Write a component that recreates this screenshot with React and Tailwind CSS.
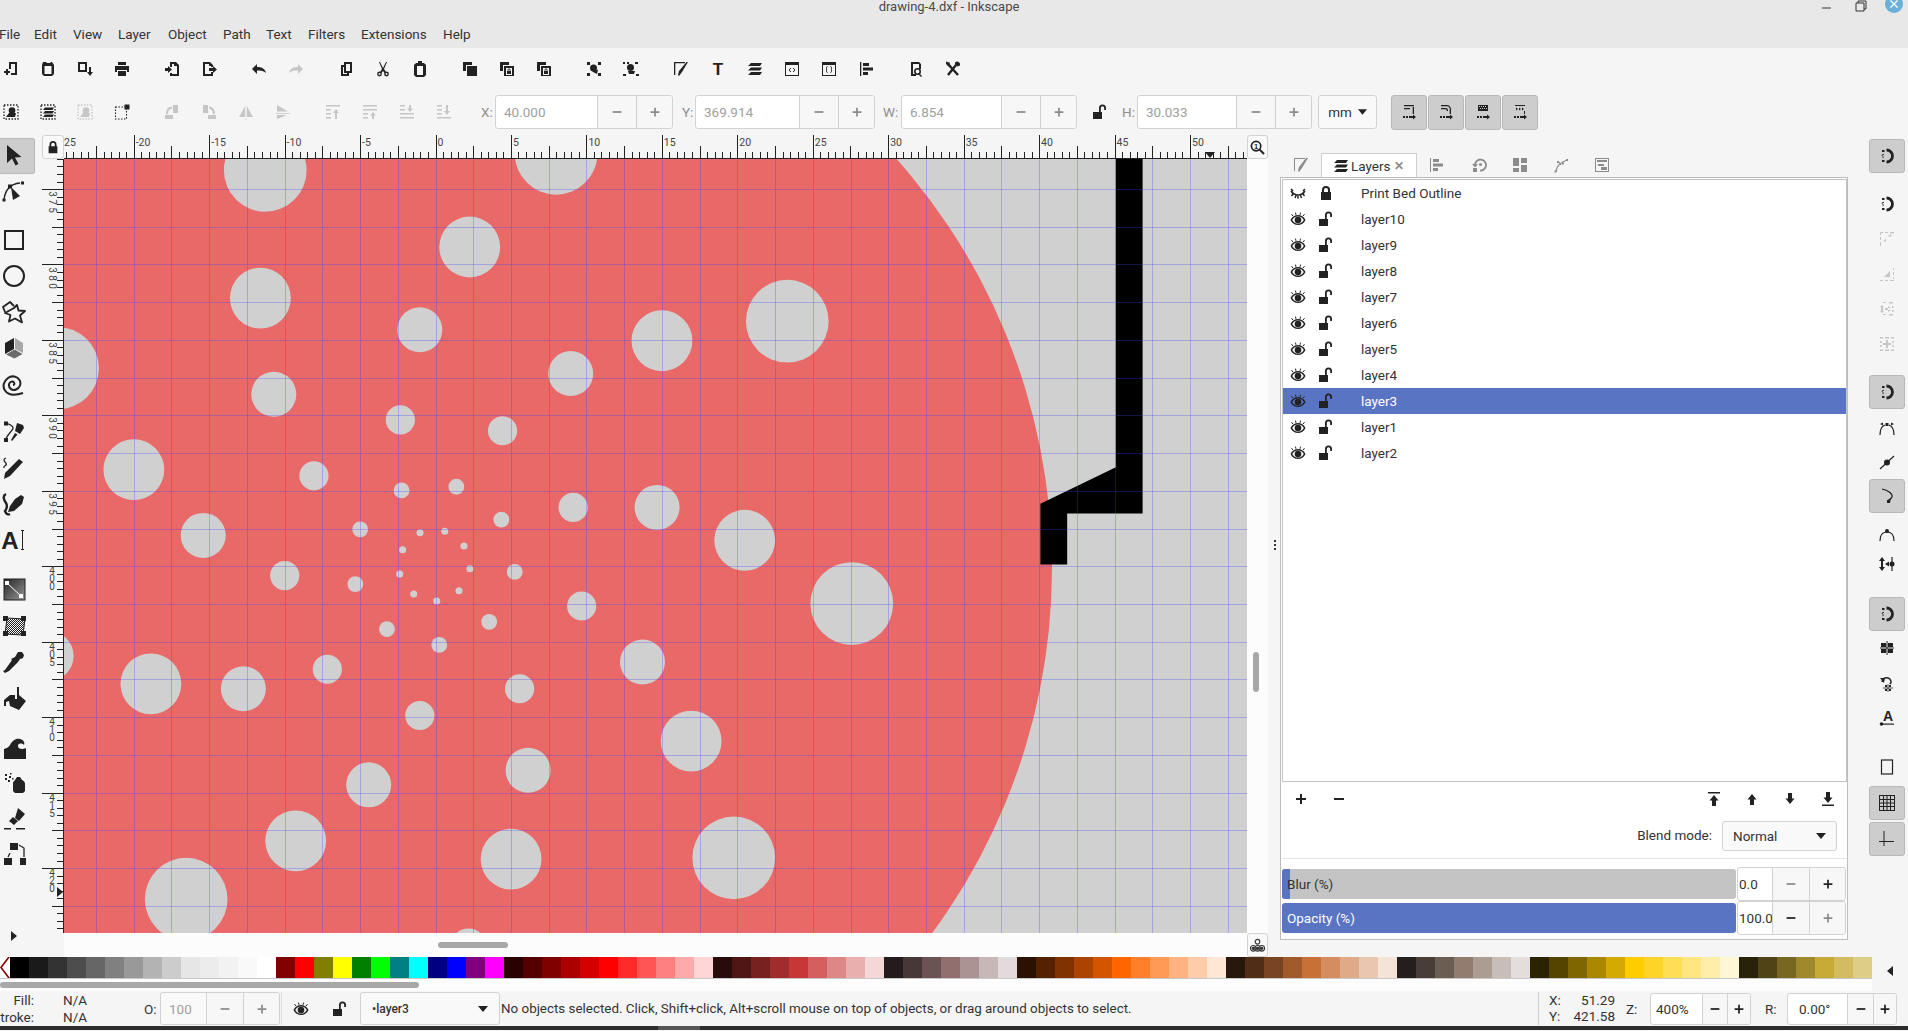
const S = 1908 / 1568

// icon drawings, 16x16 box unless noted
const I = {
  new: <path d="M6 1h8v13H8v-2h4V3H8v5H6zM3 8h2v2h2v2H5v2H3v-2H1v-2h2z" />,
  open: <path fillRule="evenodd" d="M3 1h3l1 1h3l1-1h1l2 3v9l-2 2H4l-2-2V4zM4.500 5v8h7V5z" />,
  saveas: <path fillRule="evenodd" d="M1 1h9v10H1zM3 3v6h5V3zM12 6h2v5h2l-3 4-3-4h2z" />,
  print: <path d="M4 1h8v3H4zM1 5h14v6h-2V9H3v2H1zM4 10h8v5H4z" />,
  import: <path d="M6 1h6l3 3v11H6v-3h2v1h5V5h-3V3H8v3H6zM1 7h3V5l4 3.500L4 12v-2H1z" />,
  export: <path d="M2 1h7l3 3v2h-2V5H8V3H4v10h6v-2h2v4H2zM8 7h4V5l4 3.500L12 12v-2H8z" />,
  undo: <path d="M1 8l5-5v3c4 0 8 1 9 6-2-2-5-2.500-9-2.500V13z" />,
  redo: <path d="M15 8l-5-5v3C6 6 2 7 1 12c2-2 5-2.500 9-2.500V13z" />,
  dup: <path fillRule="evenodd" d="M6 1h8v11h-3v3H3V4h3zM8 3v7h4V3zM5 6v7h4v-1H6V6z" />,
  cut: (
    <>
      <path d="M4 1l3 7-2 3 1.500 1L8 10l1.500 2L11 11 9 8l3-7h-1L8 7 5 1z" />
      <circle cx="4.500" cy="13" r="1.700" fill="none" stroke="currentColor" strokeWidth="1.400" />
      <circle cx="11.500" cy="13" r="1.700" fill="none" stroke="currentColor" strokeWidth="1.400" />
    </>
  ),
  paste: <path fillRule="evenodd" d="M6 0h4v2h2l2 2v10l-2 2H4l-2-2V4l2-2h2zM5 5v9h6V5z" />,
  group: <path d="M1 1h9v3H4v6H1zM5 5h10v10H5z" />,
  clone: (
    <>
      <path d="M1 1h9v3H4v6H1zM5 5h10v10H5z" />
      <path fill="#f6f6f6" d="M7 7h6v7H7z" />
      <path d="M8 10h4v3H8zM8.600 10V8.800a1.400 1.400 0 0 1 2.800 0V10h-.8V8.800a.6.6 0 0 0-1.200 0V10z" />
    </>
  ),
  nodeSel: (
    <>
      <path d="M1 1h3v3H1zM12 1h3v3h-3zM1 12h3v3H1zM12 12h3v3h-3z" />
      <circle cx="7.500" cy="7" r="3.500" />
      <path d="M6 10.500l6-2-1 4.500z" />
    </>
  ),
  nodeSel2: (
    <>
      <path d="M0 1h2v2H0zM4 1h2v2H4zM12 1h3v2h-3zM0 13h3v2H0zM13 13h3v2h-3z" />
      <circle cx="7.500" cy="6.500" r="3.500" />
      <path d="M5 10h7l-1 3H6z" />
    </>
  ),
  fillstroke: <path d="M1 1h11v1.300H2.300V14H1zM13.500 1H15L9 11l-3 4-1-1 1-4z" />,
  text: (
    <text x="8" y="14" fontSize="17" fontWeight="700" textAnchor="middle" fontFamily="Liberation Sans, sans-serif">
      T
    </text>
  ),
  layers: <path d="M4 2h11l-2 3H1zM4 6.500h11l-2 3H1zM4 11h11l-2 3H1z" />,
  xml: (
    <>
      <path fillRule="evenodd" d="M1 1h14v14H1zM2 4v10h12V4z" />
      <path d="M7 7L5 9l2 2M9 7l2 2-2 2" fill="none" stroke="currentColor" strokeWidth="1" />
    </>
  ),
  css: (
    <>
      <path fillRule="evenodd" d="M1 1h14v14H1zM2 4v10h12V4z" />
      <path d="M6.500 5.500c-1 0-1 1-1 3s0 3 1 3M9.500 5.500c1 0 1 1 1 3s0 3-1 3" fill="none" stroke="currentColor" strokeWidth="1" />
    </>
  ),
  align: <path d="M2 1h1.300v14H2zM5 2h6v3H5zM5 6.500h10v3H5zM5 11h5v3H5z" />,
  doc: (
    <>
      <path d="M3 1h8l2 2v5h-2V3H5v10h3v2H3z" />
      <circle cx="9.500" cy="10.500" r="2.700" fill="none" stroke="currentColor" strokeWidth="1.600" />
      <path d="M11 12l3 3-1 1-3-3z" />
    </>
  ),
  prefs: (
    <>
      <path d="M3 3l10 11" stroke="currentColor" strokeWidth="2.400" />
      <path d="M11 4L3 14" stroke="currentColor" strokeWidth="2.400" />
      <path d="M10 1.500a3 3 0 0 1 5 3l-2.500 1L10 3.500zM1 0.500l3.500 1 1 3.500-2 .5L1 3z" />
    </>
  ),
  selAll: (
    <>
      <rect x="1" y="1" width="14" height="14" fill="none" stroke="currentColor" strokeWidth="1.300" strokeDasharray="1.500 1.500" />
      <circle cx="9" cy="6.500" r="3.300" />
      <path d="M3 13l3-4h7l-1 4z" />
    </>
  ),
  selLayers: (
    <>
      <rect x="1" y="1" width="14" height="14" fill="none" stroke="currentColor" strokeWidth="1.300" strokeDasharray="1.500 1.500" />
      <path d="M5 3.500h9l-1.500 2.400H3zM5 7h9l-1.500 2.400H3zM5 10.500h9L12.500 13H3z" />
    </>
  ),
  deselect: (
    <>
      <rect x="1.500" y="3" width="11" height="12" fill="none" stroke="currentColor" strokeWidth="1.100" strokeDasharray="1.500 1.500" />
      <path d="M10.500 0.500h5v5h-5z" />
    </>
  ),
  rotL: (
    <>
      <path d="M9 1h5v8H9zM1 11h8v4H1z" />
      <path d="M3 10c0-4 1.500-6 5-6.500" fill="none" stroke="currentColor" strokeWidth="2" />
    </>
  ),
  rotR: (
    <>
      <path d="M2 1h5v8H2zM7 11h8v4H7z" />
      <path d="M13 10c0-4-1.500-6-5-6.500" fill="none" stroke="currentColor" strokeWidth="2" />
    </>
  ),
  flipH: <path d="M7.200 2v11H1zM8.800 2v11H15zM7.500 14h1v1.500h-1z" />,
  flipV: <path d="M2 1l11 6.500H2zM1 9h14v.8H1zM2 11h10l-10 4z" />,
  top: <path d="M1 1h14v1.600H1zM1 5h5v1.600H1zM1 9h5v1.600H1zM1 13h5v1.600H1zM11 5l3 4h-2v6h-2V9H8z" />,
  up: <path d="M1 1h14v1.600H1zM1 5h14v1.600H1zM1 9h5v1.600H1zM1 13h5v1.600H1zM11 8l3 3.500h-2V15h-2v-3.500H8z" />,
  down: <path d="M1 1h5v1.600H1zM1 5h5v1.600H1zM1 9h14v1.600H1zM1 13h14v1.600H1zM10 1h2v3.500h2L11 8 8 4.500h2z" />,
  bottom: <path d="M1 1h5v1.600H1zM1 5h5v1.600H1zM1 9h5v1.600H1zM1 13h14v1.600H1zM10 1h2v6h2l-3 4-3-4h2z" />,
  eye: (
    <>
      <path fillRule="evenodd" d="M0.500 9C2 5.500 5 4 8 4s6 1.500 7.500 5C14 12.500 11 14 8 14s-6-1.500-7.500-5zM2.200 9C3.500 11.500 5.500 12.600 8 12.600S12.500 11.500 13.800 9C12.500 6.500 10.500 5.400 8 5.400S3.500 6.500 2.200 9z" />
      <circle cx="8" cy="9" r="3.300" />
      <path d="M3 5L1.500 3.200M6 3.800L5.400 1.600M10 3.800l.6-2.200M13 5l1.500-1.800" stroke="currentColor" strokeWidth="1" />
    </>
  ),
  eyeOff: (
    <path d="M1 6c2 3 4.500 4 7 4s5-1 7-4M1 4l2 2M3 9L1.500 11M6 10.500L5 13M8 11v2.500M10.500 10.500L11.500 13M13 9l1.500 2M15 4l-2 2" fill="none" stroke="currentColor" strokeWidth="1.500" />
  ),
  lock: <path fillRule="evenodd" d="M4 7V5a4 4 0 0 1 8 0v2h1v8H3V7zM6 7h4V5a2 2 0 0 0-4 0z" />,
  unlock: <path d="M1 8h9v7H1zM7 8V4a3.500 3.500 0 0 1 7 0v2h-1.800V4a1.700 1.700 0 0 0-3.400 0v4z" />,
  zoom: (
    <>
      <circle cx="6.500" cy="6.500" r="5" fill="none" stroke="currentColor" strokeWidth="1.800" />
      <path d="M10 10l5 5" stroke="currentColor" strokeWidth="2.200" />
      <text x="6.500" y="9.500" fontSize="8" fontWeight="700" textAnchor="middle" fontFamily="Liberation Sans, sans-serif">
        1
      </text>
    </>
  ),
  display: (
    <g fill="none" stroke="currentColor" strokeWidth="1.200">
      <circle cx="8" cy="4" r="2.500" />
      <circle cx="3.500" cy="11" r="3" />
      <circle cx="8" cy="11" r="3" />
      <circle cx="12.500" cy="11" r="3" />
      <circle cx="3.500" cy="11" r="1.200" fill="currentColor" />
      <circle cx="8" cy="11" r="1.200" fill="currentColor" />
      <circle cx="12.500" cy="11" r="1.200" fill="currentColor" />
    </g>
  ),
  tabBrush: <path d="M1 1h11v1H2v12H1zM13 1h2L9 11l-3 4-1-1 1-4z" />,
  tabAlign: <path d="M2 1h1v14H2zM5 2h6v3H5zM5 6.500h10v3H5zM5 11h5v3H5z" />,
  tabHistory: (
    <>
      <path d="M4 8a5.500 5.500 0 1 1 5 5.500" fill="none" stroke="currentColor" strokeWidth="1.800" />
      <path d="M1 7h6L4 10.500zM2 11h4v4H2z" />
      <circle cx="9.500" cy="7.500" r="1.500" />
    </>
  ),
  tabArrange: <path d="M1 1h6v8H1zM9 1h6v5H9zM1 11h6v4H1zM9 8h6v7H9z" />,
  tabPath: (
    <>
      <path d="M3 15c0-5 3-9 11-12M8 8c-1-2-2-3-3-3" fill="none" stroke="currentColor" strokeWidth="1.200" />
      <path d="M1.500 13.500h2v2h-2zM13 2h2v2h-2zM4 4h2v2H4zM9 5.500h2v2H9z" />
    </>
  ),
  tabSym: (
    <>
      <path fillRule="evenodd" d="M1 1h14v14H1zM2 2v12h12V2z" />
      <path d="M3 3h10v2H3zM4 7h6v2H4zM7 10h6v3H7z" />
    </>
  ),
  add: <path d="M7 3h2v4h4v2H9v4H7V9H3V7h4z" />,
  sub: <path d="M3 7h10v2H3z" />,
  arrTop: <path d="M2 1h12v1.600H2zM8 4l4.500 5.500H10V15H6V9.500H3.500z" />,
  arrUp: <path d="M8 3l4.500 5.500H10V14H6V8.500H3.500z" />,
  arrDown: <path d="M6 2h4v5.500h2.500L8 13 3.500 7.500H6z" />,
  arrBottom: <path d="M2 13.400h12V15H2zM6 1h4v5.500h2.500L8 12 3.500 6.500H6z" />,
  snap: (
    <>
      <path d="M7.500 2a6 6 0 0 1 0 12" fill="none" stroke="currentColor" strokeWidth="2.800" />
      <path d="M3 2h2.500v2H3zM3 12h2.500v2H3z" />
      <path d="M5 6.500C3.500 6 2.500 7 3.500 8s1.500 1.500 0 1.800" fill="none" stroke="currentColor" strokeWidth="0.900" />
    </>
  ),
  snapBox: <path d="M1 1h3v1H2v2H1zM6 1h3v1H6zM11 1h4v1.500h-4zM1 6h1v3H1zM1 11h1v4H1zM11 3l2 2.500H9zM7 8v3L4.500 9.500z" />,
  snapCorner: <path d="M14 2h1v2h-1zM14 6h1v3h-1zM14 11h1v2h-1zM1 14h3v1H1zM6 14h3v1H6zM11 14h4v1h-4zM11 5v6H5z" />,
  snapMid: <path d="M4 1h3v1H4zM10 1h4v1.500h-4zM13 5h1.500v2H13zM13 9h1.500v2H13zM10 13h4v1.500h-4zM4 13h3v1H4zM3 4l2 2H4v4h1l-2 2-2-2h1V6H1zM6 7h6L9 5v6l3-2H6z" />,
  snapCenter: <path d="M1 1h3v1.500H1zM6 1h4v1.500H6zM12 1h3v1.500h-3zM1 5h1.500v2H1zM13.500 5H15v2h-1.500zM1 9h1.500v2H1zM13.500 9H15v2h-1.500zM1 13.500h3V15H1zM6 13.500h4V15H6zM12 13.500h3V15h-3zM7 4h2v3h3v2H9v3H7V9H4V7h3z" />,
  snapCusp: (
    <>
      <path d="M1 14C1 9 3 5 6 4M15 14c0-5-2-9-5-10" fill="none" stroke="currentColor" strokeWidth="1.200" />
      <path d="M6.500 2h3v3h-3zM1 3l3-1.500v3zM15 3l-3-1.500v3z" />
    </>
  ),
  snapPath: (
    <>
      <path d="M1 15L15 2" stroke="currentColor" strokeWidth="1.200" />
      <circle cx="8" cy="8.500" r="3" />
    </>
  ),
  snapPerp: (
    <>
      <path d="M3 1c6 1 11 5 10 8-.6 2-3 3-5 4" fill="none" stroke="currentColor" strokeWidth="1.200" />
      <path d="M8 13l4-3-1 5-3 0z" />
    </>
  ),
  snapSmooth: (
    <>
      <path d="M1 15C1 10 3 6 8 6s7 4 7 9" fill="none" stroke="currentColor" strokeWidth="1.200" />
      <circle cx="8" cy="5" r="2" />
    </>
  ),
  snapLine: (
    <>
      <path d="M3 1l3 4H4v6h2l-3 4-3-4h2V5H0z" />
      <path d="M13 1v14" stroke="currentColor" strokeWidth="1.200" />
      <path d="M6 8l4-2.500v5z" />
      <circle cx="13" cy="8" r="2.500" />
    </>
  ),
  snapGuide: (
    <>
      <path d="M1 8h14M8 1v14" stroke="currentColor" strokeWidth="1" />
      <path d="M2 3h5v4H2zM9 3h5v4H9zM2 9h5v4H2zM9 9h5v4H9z" />
    </>
  ),
  snapRot: (
    <>
      <path d="M3 6c0-3 3-5 6-4s4 4 2 6" fill="none" stroke="currentColor" strokeWidth="1.500" />
      <path d="M1 2l5 0-1 5z" />
      <path d="M4 12h10M9 8v8" stroke="currentColor" strokeWidth="0.800" />
      <path d="M6 9h2v2H6zM10 9h2v2h-2zM6 13h2v2H6zM10 13h2v2h-2z" />
    </>
  ),
  snapText: (
    <>
      <text x="9" y="11" fontSize="14" fontWeight="700" textAnchor="middle" fontFamily="Liberation Sans, sans-serif">
        A
      </text>
      <path d="M3 13.500h12v1.200H3z" />
      <circle cx="2.500" cy="14" r="1.800" />
    </>
  ),
  page: <rect x="2.500" y="1" width="11" height="14" fill="none" stroke="currentColor" strokeWidth="1.200" />,
  gridOn: (
    <path fillRule="evenodd" d="M0 0h16v16H0zM1 1v3h3V1zM5 1v3h2.500V1zM8.500 1v3H11V1zM12 1v3h3V1zM1 5v2.500h3V5zM5 5v2.500h2.500V5zM8.500 5v2.500H11V5zM12 5v2.500h3V5zM1 8.500V11h3V8.500zM5 8.500V11h2.500V8.500zM8.500 8.500V11H11V8.500zM12 8.500V11h3V8.500zM1 12v3h3v-3zM5 12v3h2.500v-3zM8.500 12v3H11v-3zM12 12v3h3v-3z" />
  ),
  guides: <path d="M5 0v15M0 10.500h15" stroke="currentColor" strokeWidth="1" />,
}

// left tool drawings, 25x25 box
const T = {
  arrow: <path d="M6 2v18l5-4.500 3.500 7 3-1.500-3.500-6.500 6.500-.5z" />,
  node: (
    <>
      <path d="M3 21C4 11 9 5 19 4" fill="none" stroke="currentColor" strokeWidth="1.400" />
      <path d="M1.500 19.500h3v3h-3zM7 5.500h4v4H7zM20 2.500h3v3h-3zM10 8l9 9-7 4z" />
    </>
  ),
  rect: <rect x="4" y="3" width="18" height="18" fill="none" stroke="currentColor" strokeWidth="2" />,
  ellipse: <circle cx="13" cy="12" r="10" fill="none" stroke="currentColor" strokeWidth="2" />,
  star: (
    <g fill="none" stroke="currentColor" strokeWidth="1.800" strokeLinejoin="round">
      <path d="M13 8l3-3 1.500 5.500 6.500.5-5 4.500 2 7-7-4-6 3 1.500-6.500L4 13z" />
      <path d="M4 12L2 7l7-5 4 4" />
    </g>
  ),
  box: (
    <>
      <path d="M4 7l9-5v11l-9 5z" />
      <path d="M14 2l8 5v10l-8-4z" fill="#a8a8a8" />
      <path d="M5 18.500l8.500-5 8 4.500-8 4.500z" fill="#6b6b6b" />
    </>
  ),
  spiral: (
    <path d="M12 13c1 0 2-1 1-2.500S8.500 9 8 12.500s3 6.500 7 5 5.500-6 3.500-9.500S11 3 7 6 1 14 4 18.500 13 24 22 21" fill="none" stroke="currentColor" strokeWidth="2" />
  ),
  bezier: (
    <>
      <path d="M5 3c3 1 7 2 7 5s-7 7-7 12" fill="none" stroke="currentColor" strokeWidth="1.300" />
      <path d="M3 1.500h4v4H3zM3 18h4v4H3zM16 3l6 2 1 3-4 6-5-3 1-4zM14 13l2.500 1.500L11 21l-1-1z" />
    </>
  ),
  pencil: (
    <>
      <path d="M18 3l4 3-13 14-6 3 1-6z" />
      <path d="M5 2C2 3 3 5 4 6s2 2 1 3-3 1-2 3" fill="none" stroke="currentColor" strokeWidth="1.300" />
    </>
  ),
  callig: (
    <>
      <path d="M14 7l6-4 3 2-2 7-8 7-6 1 2-6z" />
      <path d="M5 2C1 4 3 8 5 11s0 7-1 8c1 3 3 4 5 3" fill="none" stroke="currentColor" strokeWidth="2.400" />
    </>
  ),
  text: (
    <>
      <text x="9" y="21" fontSize="24" fontWeight="700" textAnchor="middle" fontFamily="Liberation Sans, sans-serif">
        A
      </text>
      <path d="M20 2h3v1h-1v18h1v1h-3v-1h1V3h-1z" />
    </>
  ),
  gradient: (
    <>
      <defs>
        <linearGradient id="gt" x1="0" y1="0" x2="1" y2="1">
          <stop offset="0" stopColor="#222" />
          <stop offset="1" stopColor="#999" />
        </linearGradient>
      </defs>
      <rect x="3" y="1" width="21" height="21" fill="url(#gt)" stroke="#222" />
      <path d="M6 5l14 13" stroke="#fff" strokeWidth="1" />
      <path d="M4 3h4v4H4zM18 16h4v4h-4z" fill="#fff" />
    </>
  ),
  mesh: (
    <>
      <defs>
        <pattern id="ck" width="2" height="2" patternUnits="userSpaceOnUse">
          <path d="M0 0h1v1H0zM1 1h1v1H1z" fill="#222" />
        </pattern>
      </defs>
      <path d="M6 4l18 1-2 16-18-1z" fill="url(#ck)" stroke="#222" />
      <path d="M2 2h5v5H2zM20 2h5v5h-5zM2 17h5v5H2zM20 17h5v5h-5z" />
    </>
  ),
  dropper: <path d="M17 2l4 0 2 3-1 3-3 1-2 3-9 9-4 2-2-2 2-1 7-10-1-1 4-2zM5 19l8-8 1 1-8 8z" />,
  bucket: (
    <>
      <path d="M3 14l6-5h5V1h4v8l7 6-7 9-9-4-1-5-3 1v4H3z" />
      <path d="M14 1h2v12h-2z" fill="#f5f5f5" />
    </>
  ),
  tweak: <path d="M3 24V14c3-1 5-2 6-4 2-4 6-7 10-6 4 1 5 4 4 6-2-2-6-2-6 1 0 3 4 4 8 2v11z" />,
  spray: (
    <>
      <path d="M14 9l2-3h3l2 3c2 1 3 2 3 4v7l-2 2h-8l-2-2v-8c0-1 1-2 2-3z" />
      <path d="M4 3h2v2H4zM8 5h2v2H8zM4 7h2v2H4zM7 9h2v2H7zM11 7h1.500v1.500H11zM9 2h1.500v1.500H9z" />
    </>
  ),
  eraser: <path d="M17 2l7 6-6 7-4-3zM12 11l5 4-4 4-5-4zM3 22h7v1.500H3zM15 22h9v1.500h-9z" />,
  connector: (
    <>
      <path d="M9 2h8v7H9zM3 17h8v7H3zM19 17h8v7h-8z" />
      <path d="M9 12L7 16M18 4l5 3v9" fill="none" stroke="currentColor" strokeWidth="1.300" />
    </>
  ),
}

function Ico({ name, size = 16, className = 'text-[#222]' }) {
  return (
    <svg viewBox="0 0 16 16" width={size} height={size} fill="currentColor" className={`block shrink-0 overflow-visible ${className}`}>
      {I[name]}
    </svg>
  )
}

const OFF = 'text-[#c6c6c6]'
const MID = 'text-[#8c8c8c]'

const Cell = ({ name, className }) => (
  <div className="flex h-[36px] w-[37px] shrink-0 items-center justify-center">
    <Ico name={name} className={className} />
  </div>
)

const Gap = () => <div className="w-[13px] shrink-0" />

function Spin({ value, iw, mw = 'w-[39px]', pw = 'w-[36px]', off, dim, plusOff, minusOff }) {
  const tone = off ? 'text-[#a0a0a0]' : 'text-[#333]'
  return (
    <div className={`flex h-full shrink-0 items-stretch rounded-[3px] border border-[#d2d2d2] ${dim ? 'bg-[#f9f9f9]' : 'bg-white'}`}>
      <div className={`flex items-center pl-[8px] ${iw} ${tone}`}>{value}</div>
      <div className={`flex items-center justify-center border-l border-[#d2d2d2] bg-[#f7f7f7] ${mw}`}>
        <Ico name="sub" size={14} className={off || minusOff ? MID : 'text-[#222]'} />
      </div>
      <div className={`flex items-center justify-center rounded-r-[3px] border-l border-[#d2d2d2] bg-[#f7f7f7] ${pw}`}>
        <Ico name="add" size={14} className={off || plusOff ? MID : 'text-[#222]'} />
      </div>
    </div>
  )
}

const Label = ({ children, className }) => <span className={`shrink-0 text-[#8e8e8e] ${className}`}>{children}</span>

function TopRuler() {
  const zero = 435.5 - 64
  const ticks = []
  for (let k = -60; k < 120; k++) {
    const x = Math.round(zero + k * 0.5 * 15.09) + 0.5
    if (x < 0 || x > 1183) continue
    const y = k % 10 === 0 ? 0 : k % 5 === 0 ? 11 : 17
    ticks.push(<path key={k} d={`M${x} ${y}V23`} stroke="#222" strokeWidth="1" />)
  }
  const labels = []
  for (let v = -20; v <= 50; v += 5) labels.push(v)
  return (
    <div className="relative h-[24px] flex-1 overflow-hidden border-b border-[#222]">
      <svg width="1183" height="23" className="block" shapeRendering="crispEdges">
        {ticks}
      </svg>
      <span className="absolute left-0 top-[1px] text-[10.5px] leading-[13px] text-[#444]">25</span>
      {labels.map((v) => (
        <span key={v} className="absolute top-[1px] text-[10.5px] leading-[13px] text-[#444]" style={{ left: zero + v * 15.09 + 2 }}>
          {v}
        </span>
      ))}
      <svg width="10" height="6" viewBox="0 0 10 6" className="absolute left-[1141px] top-[17px]">
        <path d="M0 0h10L5 6z" fill="#222" />
      </svg>
    </div>
  )
}

function LeftRuler() {
  const zero = 566.3 - 159
  const ticks = []
  for (let k = -60; k < 60; k++) {
    const y = Math.round(zero + k * 0.5 * 15.09) + 0.5
    if (y < 0 || y > 774) continue
    const x = k % 10 === 0 ? 0 : k % 5 === 0 ? 10 : 15
    ticks.push(<path key={k} d={`M${x} ${y}H21`} stroke="#222" strokeWidth="1" />)
  }
  const labels = []
  for (let v = 375; v <= 420; v += 5) labels.push(v)
  return (
    <div className="relative w-[22px] shrink-0 overflow-hidden border-r border-[#222]">
      <svg width="21" height="774" className="block" shapeRendering="crispEdges">
        {ticks}
      </svg>
      {labels.map((v) => (
        <div key={v} className="absolute left-[5px] flex w-[10px] flex-col items-center text-[10px] leading-[8px] text-[#444]" style={{ top: zero + ((v - 400) / 5) * 75.45 + 1 }}>
          {String(v).split('').map((d, i) => (
            <span key={i} className={v < 400 ? 'rotate-90' : ''}>
              {d}
            </span>
          ))}
        </div>
      ))}
      <svg width="6" height="10" viewBox="0 0 6 10" className="absolute left-[15px] top-[728px]">
        <path d="M0 0v10l6-5z" fill="#222" />
      </svg>
    </div>
  )
}

const HOLES = [
  [218, 140, 34], [457, 126, 34], [386, 203, 25], [214, 245, 25], [647, 264, 34], [345, 271, 18.5], [544, 280, 25],
  [469, 307, 18.5], [47.6, 302.6, 33.7], [225, 324, 18.5], [329, 345, 12], [413, 354, 12], [110, 386, 25],
  [258, 391, 12], [375, 400, 6.5], [330, 403, 6.5], [540, 417, 18.5], [471, 417, 12], [412, 427, 6.5], [612, 444, 25],
  [296, 435, 6.5], [167, 440, 18.5], [234, 473, 12], [423, 470, 6.5], [292, 480, 6.5], [402, 511, 6.5], [318, 517, 6.5],
  [361, 530, 6.5], [478, 498, 12], [700, 496, 34], [124, 562, 25], [200, 566, 18.5], [269, 550, 12], [528, 544, 18.5],
  [427, 566, 12], [345, 588, 12], [568, 609, 25], [434, 633, 18.5], [303, 645, 18.5], [243, 691, 25], [420, 706, 25],
  [603, 705, 34], [153, 739, 34], [40, 539, 20.5], [385, 778, 15],
  // small inner ring
  [345.2, 437.8, 2.9], [365.5, 436.6, 2.9], [381.3, 448.7, 2.9], [386.2, 467.4, 2.9],
  [377.2, 485.5, 2.9], [358.9, 494, 2.9], [340, 488.2, 2.9], [328.5, 471.8, 2.9], [330.9, 451.8, 2.9],
]

const SHAPE = [[917, 125], [939, 125], [939, 422], [877, 422], [877, 464], [855, 464], [855, 414], [917, 384]]

function Drawing() {
  const gx = []
  for (let k = -10; k < 22; k++) gx.push(Math.round(435.5 + k * 37.73) + 0.5)
  const gy = []
  for (let k = -11; k < 11; k++) gy.push(Math.round(566.3 + k * 37.73) + 0.5)
  return (
    <svg viewBox="64 159 1183 774" width="1183" height="774" className="block shrink-0 bg-[#d0d0d0]">
      <circle cx="436" cy="568" r="616" fill="#e96868" />
      {HOLES.map(([x, y, r], i) => (
        <circle key={i} cx={x * S} cy={y * S} r={r * S} fill="#d0d0d0" />
      ))}
      <polygon points={SHAPE.map(([x, y]) => `${x * S},${y * S}`).join(' ')} fill="#000" />
      <g stroke="#3f3fff" strokeOpacity="0.3" strokeWidth="1" shapeRendering="crispEdges">
        {gx.map((x) => (
          <path key={x} d={`M${x} 159V933`} />
        ))}
        {gy.map((y) => (
          <path key={y} d={`M64 ${y}H1247`} />
        ))}
      </g>
    </svg>
  )
}

const TOOLS = [
  ['arrow', 'mt-0'], ['node', 'mt-0'],
  ['rect', 'mt-[13px]'], ['ellipse', 'mt-0'], ['star', 'mt-0'], ['box', 'mt-0'], ['spiral', 'mt-0'],
  ['bezier', 'mt-[12px]'], ['pencil', 'mt-0'], ['callig', 'mt-0'], ['text', 'mt-0'],
  ['gradient', 'mt-[14px]'], ['mesh', 'mt-0'], ['dropper', 'mt-0'], ['bucket', 'mt-0'],
  ['tweak', 'mt-[13px]'], ['spray', 'mt-0'], ['eraser', '-mt-px'], ['connector', '-mt-px'],
]

function LeftTools() {
  return (
    <div className="flex w-[42px] shrink-0 flex-col pt-[3px]">
      {TOOLS.map(([name, mt], i) => (
        <div key={name} className={`flex h-[36px] w-[35px] shrink-0 items-center justify-center ${mt} ${i === 0 ? 'h-[35px] rounded-r-[3px] border border-l-0 border-[#b8b8b8] bg-[#cdcdcd]' : ''}`}>
          <svg viewBox="0 0 25 25" width="25" height="25" fill="currentColor" className="block -translate-x-[4px] -translate-y-px text-[#222]">
            {T[name]}
          </svg>
        </div>
      ))}
      <div className="mt-[57px] flex h-[14px] w-[28px] items-center justify-center">
        <svg width="6" height="10" viewBox="0 0 6 10" className="block">
          <path d="M0 0v10l6-5z" fill="#222" />
        </svg>
      </div>
    </div>
  )
}

const SNAPS = [
  ['snap', 'mt-[4px]', 1], ['snap', 'mt-[14px]'], ['snapBox', 'mt-px', 0, 1], ['snapCorner', 'mt-px', 0, 1],
  ['snapMid', 'mt-px', 0, 1], ['snapCenter', 'mt-px', 0, 1], ['snap', 'mt-[14px]', 1], ['snapCusp', 'mt-[3px]'],
  ['snapPath', '-mt-px'], ['snapPerp', 'mt-0', 1], ['snapSmooth', 'mt-[4px]'], ['snapLine', '-mt-[4px]'],
  ['snap', 'mt-[16px]', 1], ['snapGuide', 'mt-0'], ['snapRot', 'mt-[2px]'], ['snapText', 'mt-0'],
  ['page', 'mt-[15px]'], ['gridOn', 'mt-[2px]', 1], ['guides', 'mt-[2px]', 1],
]

function RightTools() {
  return (
    <div className="ml-[21px] flex w-[36px] shrink-0 flex-col">
      {SNAPS.map(([name, mt, on, off], i) => (
        <div key={i} className={`flex h-[34px] w-[36px] shrink-0 items-center justify-center rounded-[3px] ${mt} ${on ? 'border border-[#b8b8b8] bg-[#cdcdcd]' : ''}`}>
          <Ico name={name} className={off ? OFF : 'text-[#222]'} />
        </div>
      ))}
    </div>
  )
}

const LAYERS = ['Print Bed Outline', 'layer10', 'layer9', 'layer8', 'layer7', 'layer6', 'layer5', 'layer4', 'layer3', 'layer1', 'layer2']

function LayersPanel() {
  return (
    <div className="mt-[18px] flex h-[787px] w-[568px] shrink-0 flex-col">
      <div className="flex h-[24px] shrink-0 items-stretch">
        <div className="flex w-[41px] items-center justify-center">
          <Ico name="tabBrush" className={MID} />
        </div>
        <div className="-mb-px flex w-[96px] items-center border border-b-0 border-[#cfcfcf] bg-white pl-[11px]">
          <Ico name="layers" />
          <span className="ml-[2px] text-[#333]">Layers</span>
          <span className="ml-[3px] text-[12px] font-bold leading-none text-[#8a8a8a]">✕</span>
        </div>
        <div className="flex items-center justify-center pl-[11px]">
          <Ico name="tabAlign" className={MID} />
        </div>
        <div className="flex items-center justify-center pl-[27px]">
          <Ico name="tabHistory" className={MID} />
        </div>
        <div className="flex items-center justify-center pl-[25px]">
          <Ico name="tabArrange" className={MID} />
        </div>
        <div className="flex items-center justify-center pl-[25px]">
          <Ico name="tabPath" className={MID} />
        </div>
        <div className="flex items-center justify-center pl-[25px]">
          <Ico name="tabSym" className={MID} />
        </div>
      </div>
      <div className="flex flex-1 flex-col border border-[#bdbdbd] bg-white pl-px">
        <div className="mt-px h-[603px] shrink-0 border border-[#c4c4c4] bg-white">
          {LAYERS.map((name, i) => (
            <div key={name} className={`flex h-[26px] items-center ${name === 'layer3' ? 'bg-[#5a74c4] text-white' : 'text-[#333]'}`}>
              <div className="flex w-[29px] justify-center pl-px">
                <Ico name={i === 0 ? 'eyeOff' : 'eye'} />
              </div>
              <div className="flex w-[27px] justify-center pl-px">
                <Ico name={i === 0 ? 'lock' : 'unlock'} />
              </div>
              <span className="ml-[22px]">{name}</span>
            </div>
          ))}
        </div>
        <div className="flex h-[34px] shrink-0 items-center pl-[11px] pr-[11px]">
          <Ico name="add" />
          <Ico name="sub" className="ml-[22px] text-[#222]" />
          <div className="ml-auto flex gap-[22px]">
            <Ico name="arrTop" />
            <Ico name="arrUp" />
            <Ico name="arrDown" />
            <Ico name="arrBottom" />
          </div>
        </div>
        <div className="flex h-[43px] shrink-0 items-start justify-end border-b border-[#e4e4e4] pr-[10px] pt-[5px]">
          <span className="mr-[10px] mt-[6px] text-[#333]">Blend mode:</span>
          <div className="flex h-[30px] w-[115px] items-center justify-between rounded-[3px] border border-[#d2d2d2] bg-[#f9f9f9] pl-[10px] pr-[10px] text-[#333]">
            Normal
            <svg width="10" height="6" viewBox="0 0 10 6" className="block">
              <path d="M0 0h10L5 6z" fill="#222" />
            </svg>
          </div>
        </div>
        <div className="mt-[8px] flex h-[34px] shrink-0 items-center pr-px">
          <div className="relative flex h-[30px] flex-1 items-center rounded-[3px] bg-[#c4c4c4] pl-[5px] text-[#333]">
            <div className="absolute inset-y-0 left-0 w-[8px] rounded-l-[3px] bg-[#5a74c4]" />
            <span className="relative">Blur (%)</span>
          </div>
          <div className="ml-px h-full">
            <Spin value="0.0" iw="w-[34px] !pl-[1px]" mw="w-[37px]" pw="w-[36px]" minusOff />
          </div>
        </div>
        <div className="flex h-[34px] shrink-0 items-center pr-px">
          <div className="flex h-[30px] flex-1 items-center rounded-[3px] bg-[#5a74c4] pl-[5px] text-white">Opacity (%)</div>
          <div className="ml-px h-full">
            <Spin value="100.0" iw="w-[34px] !pl-[1px]" mw="w-[37px]" pw="w-[36px]" plusOff />
          </div>
        </div>
      </div>
    </div>
  )
}

const PALETTE = [
  '#000000', '#1a1a1a', '#333333', '#4d4d4d', '#666666', '#808080', '#999999', '#b3b3b3', '#cccccc', '#e6e6e6', '#ececec', '#f2f2f2', '#f9f9f9', '#ffffff',
  '#800000', '#ff0000', '#808000', '#ffff00', '#008000', '#00ff00', '#008080', '#00ffff', '#000080', '#0000ff', '#800080', '#ff00ff',
  '#2b0000', '#550000', '#800000', '#aa0000', '#d40000', '#ff0000', '#ff2a2a', '#ff5555', '#ff8080', '#ffaaaa', '#ffd5d5',
  '#280b0b', '#501616', '#782121', '#a02c2c', '#c83737', '#d35f5f', '#de8787', '#e9afaf', '#f4d7d7',
  '#241c1c', '#483737', '#6c5353', '#916f6f', '#ac9393', '#c8b7b7', '#e3dbdb',
  '#2b1100', '#552200', '#803300', '#aa4400', '#d45500', '#ff6600', '#ff7f2a', '#ff9955', '#ffb380', '#ffccaa', '#ffe6d5',
  '#28170b', '#502d16', '#784421', '#a05a2c', '#c87137', '#d38d5f', '#deaa87', '#e9c6af', '#f4e3d7',
  '#241f1c', '#483e37', '#6c5d53', '#917c6f', '#ac9d93', '#c8beb7', '#e3dedb',
  '#2b2200', '#554400', '#806600', '#aa8800', '#d4aa00', '#ffcc00', '#ffd42a', '#ffdd55', '#ffe680', '#ffeeaa', '#fff6d5',
  '#28220b', '#504416', '#786721', '#a0892c', '#c8ab37', '#d3bc5f', '#decd87', '#e9ddaf',
]

const MENUS = [
  ['File', 'w-[35px] -ml-[1px]'], ['Edit', 'w-[39px]'], ['View', 'w-[45px]'], ['Layer', 'w-[50px]'], ['Object', 'w-[55px]'],
  ['Path', 'w-[43px]'], ['Text', 'w-[42px]'], ['Filters', 'w-[53px]'], ['Extensions', 'w-[82px]'], ['Help', 'w-[40px]'],
]

export default function App() {
  return (
    <div className="flex h-[1031px] w-[1908px] flex-col overflow-hidden bg-[#f5f5f5] font-['Roboto',sans-serif] text-[13.5px] leading-[16px]">
      {/* title and menu */}
      <div className="h-[48px] shrink-0 bg-[#e8e8e8]">
        <div className="relative flex h-[14px] items-start justify-center pr-[10px] text-[13px] leading-[13px] text-[#4a4a4a]">
          drawing-4.dxf - Inkscape
          <svg width="90" height="14" viewBox="0 0 90 14" className="absolute left-[1818px] top-0">
            <path d="M4 8h9" stroke="#333" strokeWidth="1" />
            <path d="M38 3h8v8h-8zM40 3V1h8v8h-2" fill="none" stroke="#333" strokeWidth="1" />
            <circle cx="76" cy="4" r="9" fill="#6bb0d8" />
            <path d="M72.500 0.500l7 7M79.500 0.500l-7 7" stroke="#fff" strokeWidth="1.400" />
          </svg>
        </div>
        <div className="flex h-[34px] items-center pt-[6px] text-[#333]">
          {MENUS.map(([m, w]) => (
            <span key={m} className={`shrink-0 ${w}`}>
              {m}
            </span>
          ))}
        </div>
      </div>

      {/* command bar */}
      <div className="-ml-[8px] flex h-[47px] shrink-0 items-center pb-[6px]">
        <Cell name="new" /><Cell name="open" /><Cell name="saveas" /><Cell name="print" /><Gap />
        <Cell name="import" /><Cell name="export" /><Gap />
        <Cell name="undo" /><Cell name="redo" className={OFF} /><Gap />
        <Cell name="dup" /><Cell name="cut" /><Cell name="paste" /><Gap />
        <Cell name="group" /><Cell name="clone" /><Cell name="clone" /><Gap />
        <Cell name="nodeSel" /><Cell name="nodeSel2" /><Gap />
        <Cell name="fillstroke" /><Cell name="text" /><Cell name="layers" /><Cell name="xml" /><Cell name="css" /><Cell name="align" /><Gap />
        <Cell name="doc" /><Cell name="prefs" />
      </div>

      {/* selector controls */}
      <div className="-ml-[8px] flex h-[40px] shrink-0 items-center pb-[6px]">
        <Cell name="selAll" /><Cell name="selLayers" /><Cell name="selAll" className={OFF} /><Cell name="deselect" /><Gap />
        <Cell name="rotL" className={OFF} /><Cell name="rotR" className={OFF} /><Cell name="flipH" className={OFF} /><Cell name="flipV" className={OFF} /><Gap />
        <Cell name="top" className={OFF} /><Cell name="up" className={OFF} /><Cell name="down" className={OFF} /><Cell name="bottom" className={OFF} />
        <div className="flex h-[34px] items-center">
          <Label className="ml-[19px] w-[14px]">X:</Label>
          <Spin value="40.000" iw="w-[101px]" off />
          <Label className="ml-[9px] w-[13px]">Y:</Label>
          <Spin value="369.914" iw="w-[103px]" off />
          <Label className="ml-[8px] w-[18px]">W:</Label>
          <Spin value="6.854" iw="w-[99px]" off />
          <div className="flex w-[45px] justify-center">
            <Ico name="unlock" />
          </div>
          <Label className="w-[15px]">H:</Label>
          <Spin value="30.033" iw="w-[98px]" off />
          <div className="ml-[6px] flex h-[34px] w-[59px] items-center justify-center gap-[6px] rounded-[3px] border border-[#d2d2d2] bg-[#f9f9f9] text-[#333]">
            mm
            <svg width="9" height="6" viewBox="0 0 10 6" className="block">
              <path d="M0 0h10L5 6z" fill="#222" />
            </svg>
          </div>
          <div className="ml-[14px] flex gap-px">
            {[0, 1, 2, 3].map((n) => (
              <div key={n} className="flex h-[35px] w-[36px] items-center justify-center rounded-[3px] border border-[#b8b8b8] bg-[#cdcdcd]">
                <svg width="16" height="16" viewBox="0 0 16 16" fill="currentColor" className="block text-[#222]">
                  {n === 0 && <path d="M3 1h10v1.300H3zM3 4h6v1.300H3zM11.700 3h1.300v7h-1.300z" />}
                  {n === 1 && <path d="M3 1h6c2 0 4 2 4 4v5h-1.300V5c0-1.500-1-2.700-2.700-2.700H3zM3 4h5c1 0 2 1 2 2v1H8.700V6.500C8.700 5.800 8 5.300 7.500 5.300H3z" />}
                  {n === 2 && <path fillRule="evenodd" d="M3 1h10v6H3zM4 2v1h1V2zM6 2v1h1V2zM8 2v1h1V2zM10 2v1h1V2zM5 4v1h1V4zM7 4v1h1V4zM9 4v1h1V4zM11 4v1h1V4z" />}
                  {n === 3 && <path d="M3 1h10v1H3zM4 3.500l2 1.500-2 1.500zM7 3.500L9 5 7 6.500zM10 3.500l2 1.500-2 1.500zM12 7h1v3h-1z" />}
                  <path d="M2 12h2v2H2zM5 12h2v2H5zM8 12h4v-1.500l3 2.500-3 2.500V14H8z" />
                </svg>
              </div>
            ))}
          </div>
        </div>
      </div>

      {/* main area */}
      <div className="flex h-[822px] shrink-0 items-start">
        <LeftTools />
        <div className="flex w-[1226px] shrink-0 flex-col">
          <div className="flex h-[24px]">
            <div className="flex w-[22px] shrink-0 items-center justify-center rounded-[3px] border border-[#d2d2d2] bg-[#f9f9f9]">
              <Ico name="lock" size={14} />
            </div>
            <TopRuler />
            <div className="flex w-[21px] shrink-0 items-center justify-center rounded-[3px] border border-[#d2d2d2] bg-[#f9f9f9]">
              <Ico name="zoom" size={15} />
            </div>
          </div>
          <div className="flex h-[774px]">
            <LeftRuler />
            <Drawing />
            <div className="relative w-[21px] shrink-0 bg-[#fcfcfc]">
              <div className="absolute left-[6px] top-[493px] h-[40px] w-[6px] rounded-full bg-[#a8a8a8]" />
            </div>
          </div>
          <div className="flex h-[24px]">
            <div className="w-[22px] shrink-0" />
            <div className="relative w-[1183px] shrink-0 bg-[#fcfcfc]">
              <div className="absolute left-[374px] top-[9px] h-[6px] w-[70px] rounded-full bg-[#a8a8a8]" />
            </div>
            <div className="flex w-[21px] shrink-0 items-center justify-center rounded-[3px] border border-[#d2d2d2] bg-[#f9f9f9]">
              <Ico name="display" size={15} className="text-[#333]" />
            </div>
          </div>
        </div>
        <div className="flex h-full w-[12px] shrink-0 items-center justify-center pb-[2px] pl-px">
          <div className="flex flex-col gap-[2px]">
            <div className="h-[2px] w-[2px] bg-[#333]" />
            <div className="h-[2px] w-[2px] bg-[#333]" />
            <div className="h-[2px] w-[2px] bg-[#333]" />
          </div>
        </div>
        <LayersPanel />
        <RightTools />
      </div>

      {/* palette */}
      <div className="flex h-[22px] shrink-0 items-stretch">
        <div className="flex w-[1872px] shrink-0 overflow-hidden border-b border-[#c8c8c8]">
          <svg width="10" height="21" viewBox="0 0 10 21" className="block shrink-0 bg-white">
            <path d="M9 0L1 10.500 9 21" fill="none" stroke="#800000" strokeWidth="1.600" />
          </svg>
          {PALETTE.map((c, i) => (
            <div key={i} className="w-[19px] shrink-0" style={{ backgroundColor: c }} />
          ))}
        </div>
        <div className="flex flex-1 items-center justify-center pt-[6px]">
          <svg width="6" height="10" viewBox="0 0 6 10" className="block">
            <path d="M6 0v10L0 5z" fill="#222" />
          </svg>
        </div>
      </div>
      <div className="flex h-[12px] shrink-0">
        <div className="w-[1872px] bg-[#fcfcfc] pt-[3px]">
          <div className="h-[6px] w-[419px] rounded-full bg-[#a8a8a8]" />
        </div>
      </div>

      {/* status bar */}
      <div className="flex h-[35px] shrink-0 items-center text-[#333]">
        <div className="grid w-[144px] shrink-0 grid-cols-[34px_1fr] gap-x-[29px] leading-[17px]">
          <div className="flex justify-end">Fill:</div>
          <div>N/A</div>
          <div className="flex justify-end whitespace-nowrap">Stroke:</div>
          <div>N/A</div>
        </div>
        <span className="w-[16px] shrink-0">O:</span>
        <div className="h-[33px]">
          <Spin value="100" iw="w-[45px]" mw="w-[37px]" pw="w-[36px]" off dim />
        </div>
        <div className="ml-px h-[33px] w-px bg-[#dcdcdc]" />
        <div className="flex w-[38px] justify-center">
          <Ico name="eye" />
        </div>
        <div className="flex w-[40px] justify-center">
          <Ico name="unlock" />
        </div>
        <div className="flex h-[33px] w-[140px] shrink-0 items-center justify-between rounded-[3px] border border-[#d2d2d2] bg-[#f9f9f9] pl-[11px] pr-[11px] text-[12px] font-medium">
          •layer3
          <svg width="10" height="6" viewBox="0 0 10 6" className="block">
            <path d="M0 0h10L5 6z" fill="#222" />
          </svg>
        </div>
        <span className="ml-px w-[1037px] shrink-0 whitespace-nowrap text-[13.4px]">
          No objects selected. Click, Shift+click, Alt+scroll mouse on top of objects, or drag around objects to select.
        </span>
        <div className="h-[33px] w-px shrink-0 bg-[#cfcfcf]" />
        <div className="mb-px ml-[10px] flex w-[66px] shrink-0 flex-col leading-[16px]">
          <div className="flex justify-between"><span>X:</span><span>51.29</span></div>
          <div className="flex justify-between"><span>Y:</span><span>421.58</span></div>
        </div>
        <span className="ml-[11px] w-[24px] shrink-0">Z:</span>
        <div className="h-[32px]">
          <Spin value="400%" iw="w-[51px] !pl-[5px]" mw="w-[25px]" pw="w-[23px]" />
        </div>
        <span className="ml-[14px] w-[22px] shrink-0">R:</span>
        <div className="h-[32px]">
          <Spin value="0.00°" iw="w-[59px] !pl-[11px]" mw="w-[26px]" pw="w-[23px]" />
        </div>
      </div>
      <div className="flex h-[4px] shrink-0 bg-[#2d2d2d]">
        <div className="ml-[658px] w-[42px] bg-[#555]" />
      </div>
    </div>
  )
}
